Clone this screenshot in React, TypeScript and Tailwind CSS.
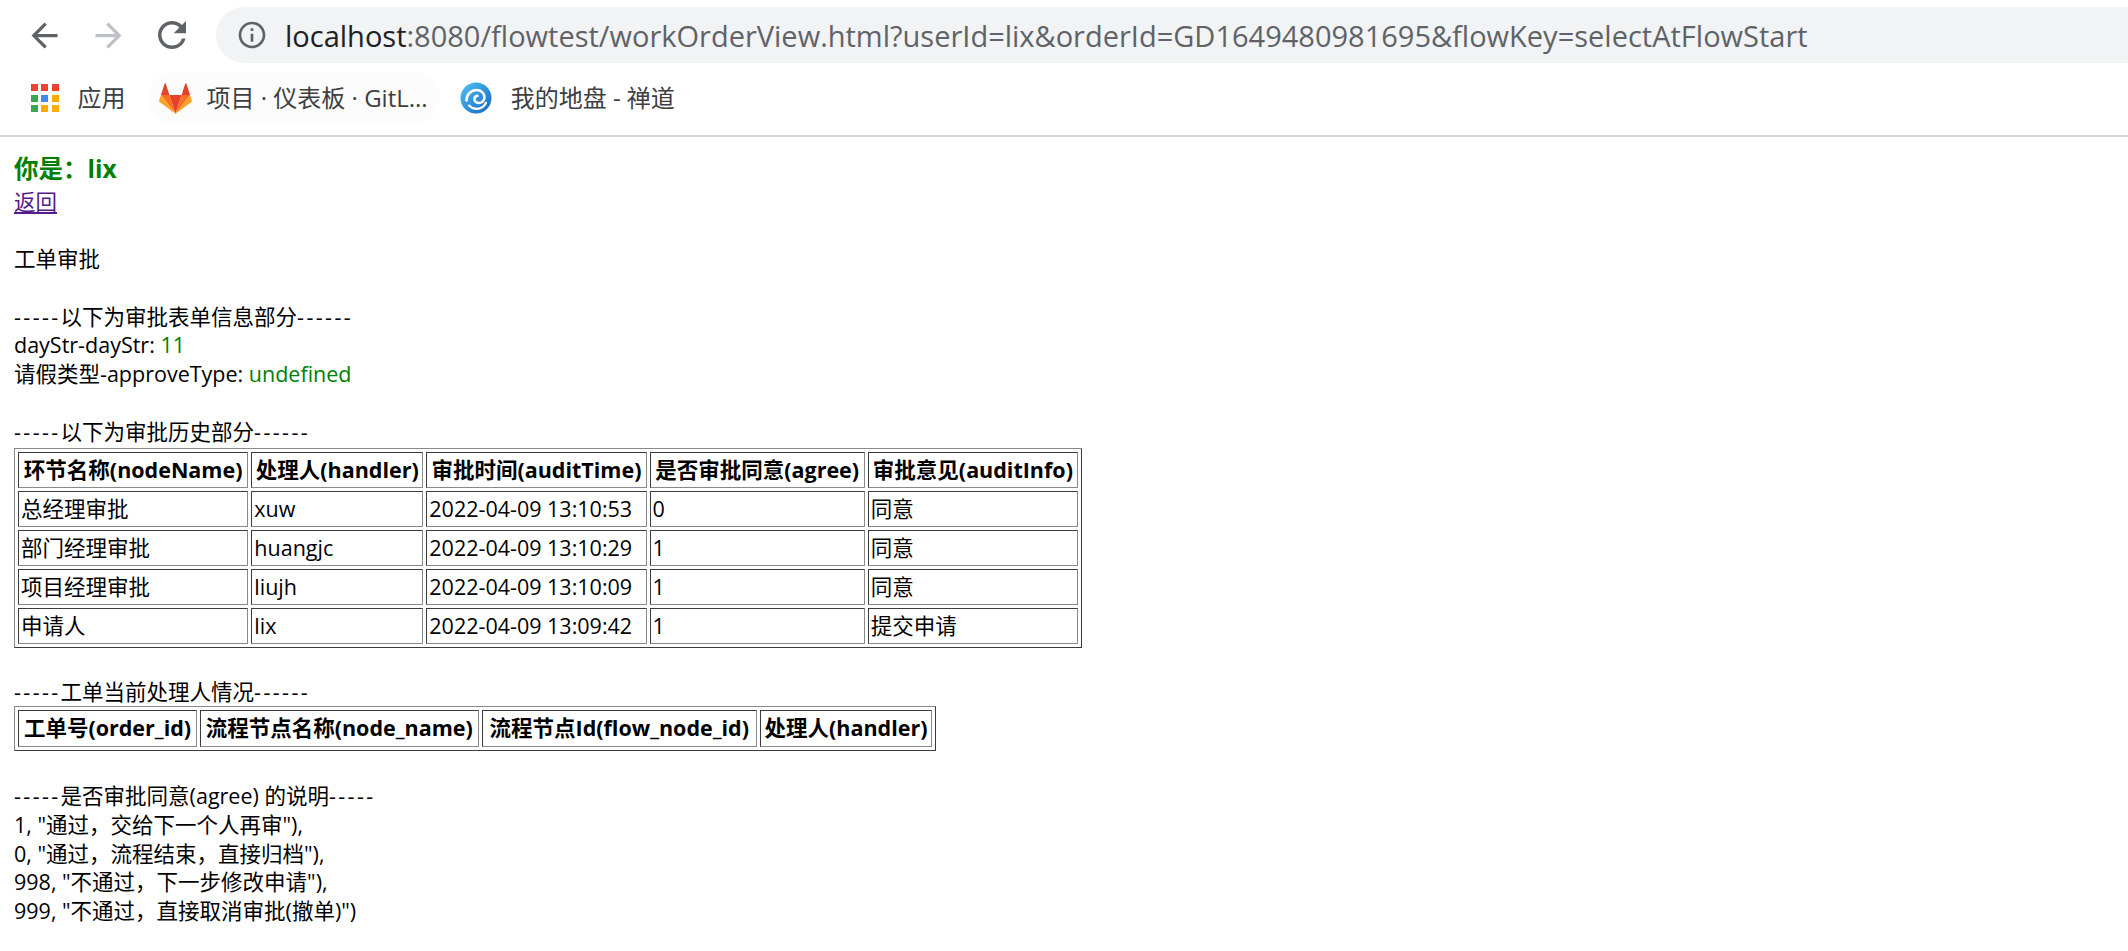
import React from "react";

type HistoryRow = {
  node: string;
  handler: string;
  time: string;
  agree: string;
  info: string;
};

const history: HistoryRow[] = [
  { node: "总经理审批", handler: "xuw", time: "2022-04-09 13:10:53", agree: "0", info: "同意" },
  { node: "部门经理审批", handler: "huangjc", time: "2022-04-09 13:10:29", agree: "1", info: "同意" },
  { node: "项目经理审批", handler: "liujh", time: "2022-04-09 13:10:09", agree: "1", info: "同意" },
  { node: "申请人", handler: "lix", time: "2022-04-09 13:09:42", agree: "1", info: "提交申请" },
];

const agreeNotes = [
  '1, "通过，交给下一个人再审"),',
  '0, "通过，流程结束，直接归档"),',
  '998, "不通过，下一步修改申请"),',
  '999, "不通过，直接取消审批(撤单)")',
];

const cellBorder =
  "border border-solid border-t-[#3c3c3c] border-l-[#3c3c3c] border-r-[#8a8a8a] border-b-[#8a8a8a]";
const tableBorder =
  "border border-solid border-t-[#8a8a8a] border-l-[#8a8a8a] border-r-[#3c3c3c] border-b-[#3c3c3c]";

// section titles like "-----xxx------": the dashes are wider in the original font
function Divider({ left, text, right }: { left: number; text: string; right: number }) {
  return (
    <div>
      <span className="tracking-[2.4px]">{"-".repeat(left)}</span>
      {text}
      <span className="tracking-[2.4px]">{"-".repeat(right)}</span>
    </div>
  );
}

function AppsIcon() {
  const colors = [
    "bg-[#ea4335]", "bg-[#ea4335]", "bg-[#ea4335]",
    "bg-[#34a853]", "bg-[#4285f4]", "bg-[#f9ab00]",
    "bg-[#34a853]", "bg-[#f9ab00]", "bg-[#f9ab00]",
  ];
  return (
    <div className="grid grid-cols-[7px_7px_7px] gap-[3.3px]">
      {colors.map((c, i) => (
        <span key={i} className={`block w-[7px] h-[7px] ${c}`} />
      ))}
    </div>
  );
}

function GitLabIcon() {
  return (
    <svg width="33" height="31" viewBox="0 0 210 194">
      <path d="M105.06 193.66L143.7 74.73H66.42z" fill="#e24329" />
      <path d="M105.06 193.65L66.42 74.73H12.27z" fill="#fc6d26" />
      <path d="M12.27 74.73L.53 110.87c-1.07 3.3.1 6.91 2.9 8.95l101.63 73.84z" fill="#fca326" />
      <path d="M12.27 74.73h54.15L43.2 3.26c-1.2-3.68-6.4-3.68-7.6 0z" fill="#e24329" />
      <path d="M105.06 193.65l38.64-118.92h54.15z" fill="#fc6d26" />
      <path d="M197.85 74.73l11.74 36.14c1.07 3.3-.1 6.91-2.9 8.95l-101.63 73.84z" fill="#fca326" />
      <path d="M197.85 74.73h-54.15l23.27-71.47c1.2-3.68 6.4-3.68 7.6 0z" fill="#e24329" />
    </svg>
  );
}

function ZentaoIcon() {
  return (
    <svg width="32" height="32" viewBox="0 0 32 32">
      <defs>
        <linearGradient id="zt" x1="0" y1="0" x2="1" y2="1">
          <stop offset="0" stopColor="#4fc3f7" />
          <stop offset="1" stopColor="#1565c0" />
        </linearGradient>
      </defs>
      <circle cx="16" cy="16" r="15.5" fill="url(#zt)" />
      <path
        d="M6.5 18.5c0-6 4.5-10.5 10-10.5 4.6 0 8 3.2 8 7.2 0 3.3-2.6 5.8-5.6 5.8-2.6 0-4.5-1.8-4.5-4 0-1.8 1.4-3.2 3.1-3.2"
        stroke="#fff"
        strokeWidth="2.6"
        strokeLinecap="round"
        fill="none"
      />
      <path
        d="M9 23.5c2 2.2 4.6 3.3 7.6 3.3 4.2 0 7.8-2.4 9.4-6"
        stroke="#fff"
        strokeWidth="2.2"
        strokeLinecap="round"
        fill="none"
      />
    </svg>
  );
}

function BrowserChrome() {
  return (
    <div className="font-['Open_Sans','Noto_Sans_CJK_SC',sans-serif]">
      <div className="h-[70px] flex items-center pl-[24.5px]">
        <svg width="39" height="39" viewBox="0 0 24 24" fill="#5f6368">
          <path d="M20 11H7.83l5.59-5.59L12 4l-8 8 8 8 1.41-1.41L7.83 13H20v-2z" />
        </svg>
        <svg width="39" height="39" viewBox="0 0 24 24" fill="#bdc1c6" className="ml-[25px]">
          <path d="M12 4l-1.41 1.41L16.17 11H4v2h12.17l-5.58 5.59L12 20l8-8z" />
        </svg>
        <svg width="42" height="42" viewBox="0 0 24 24" fill="#5f6368" className="ml-[23.5px]">
          <path d="M17.65 6.35A7.958 7.958 0 0 0 12 4c-4.42 0-7.99 3.58-7.99 8s3.57 8 7.99 8c3.73 0 6.84-2.55 7.73-6h-2.08A5.99 5.99 0 0 1 12 18c-3.31 0-6-2.69-6-6s2.69-6 6-6c1.66 0 3.14.69 4.22 1.78L13 11h7V4l-2.35 2.35z" />
        </svg>
        <div className="ml-[23px] flex-1 h-[56px] rounded-l-full bg-[#f1f3f4] flex items-center pl-[20px]">
          <svg width="32" height="32" viewBox="0 0 24 24" fill="#5f6368">
            <path d="M11 7h2v2h-2zm0 4h2v6h-2zm1-9C6.48 2 2 6.48 2 12s4.48 10 10 10 10-4.48 10-10S17.52 2 12 2zm0 18c-4.41 0-8-3.59-8-8s3.59-8 8-8 8 3.59 8 8-3.59 8-8 8z" />
          </svg>
          <span className="ml-[17px] text-[29px] leading-none whitespace-nowrap text-[#5f6368]">
            <span className="text-[#202124]">localhost</span>
            :8080/flowtest/workOrderView.html?userId=lix&amp;orderId=GD1649480981695&amp;flowKey=selectAtFlowStart
          </span>
        </div>
      </div>
      <div className="h-[67px] border-b-2 border-[#d6d6d6] flex items-center pb-[9px] text-[24px] text-[#3c4043] whitespace-nowrap">
        <div className="ml-[31px] flex items-center">
          <AppsIcon />
          <span className="ml-[19px]">应用</span>
        </div>
        <div className="ml-[22px] h-[52px] rounded-full bg-[#fcfcfc] flex items-center pl-[11px] pr-[12px]">
          <GitLabIcon />
          <span className="ml-[15px]">项目 · 仪表板 · GitL...</span>
        </div>
        <div className="ml-[20px] flex items-center">
          <ZentaoIcon />
          <span className="ml-[19px]">我的地盘 - 禅道</span>
        </div>
      </div>
    </div>
  );
}

function HistoryTable() {
  const widths = ["w-[229px]", "w-[171px]", "w-[219px]", "w-[214px]", "w-[209px]"];
  const heads = ["环节名称(nodeName)", "处理人(handler)", "审批时间(auditTime)", "是否审批同意(agree)", "审批意见(auditInfo)"];
  return (
    <table className={`${tableBorder} border-separate border-spacing-[3.5px] table-fixed w-[1068px] mt-[2px] mb-[1px]`}>
      <thead>
        <tr>
          {heads.map((h, i) => (
            <th key={h} className={`${cellBorder} ${widths[i]} px-[2px] py-[2px] leading-[29.5px] font-bold text-center whitespace-nowrap`}>
              {h}
            </th>
          ))}
        </tr>
      </thead>
      <tbody>
        {history.map((r) => (
          <tr key={r.node}>
            {[r.node, r.handler, r.time, r.agree, r.info].map((v, i) => (
              <td key={i} className={`${cellBorder} px-[2px] py-[2px] leading-[30px] text-left whitespace-nowrap`}>
                {v}
              </td>
            ))}
          </tr>
        ))}
      </tbody>
    </table>
  );
}

function CurrentHandlerTable() {
  const heads = [
    { label: "工单号(order_id)", w: "w-[178px]" },
    { label: "流程节点名称(node_name)", w: "w-[277px]" },
    { label: "流程节点Id(flow_node_id)", w: "w-[274px]" },
    { label: "处理人(handler)", w: "w-[171px]" },
  ];
  return (
    <table className={`${tableBorder} border-separate border-spacing-[3.5px] table-fixed w-[922px] mb-[2.5px]`}>
      <thead>
        <tr>
          {heads.map((h) => (
            <th key={h.label} className={`${cellBorder} ${h.w} px-[2px] py-[2px] leading-[30.5px] font-bold text-center whitespace-nowrap`}>
              {h.label}
            </th>
          ))}
        </tr>
      </thead>
      <tbody />
    </table>
  );
}

export default function App() {
  return (
    <div className="w-[2128px] h-[951px] overflow-hidden bg-white text-black">
      <BrowserChrome />
      <main className="p-[14px] text-[21.5px] leading-[28.75px] font-['Open_Sans','Noto_Sans_CJK_SC',sans-serif]">
        <div className="text-[24.5px] leading-[36.5px] font-bold text-[#008000]">你是：lix</div>
        <a href="#" className="underline text-[#551a8b]">返回</a>
        <br />
        <br />
        <div>工单审批</div>
        <br />
        <Divider left={5} text="以下为审批表单信息部分" right={6} />
        <div>
          dayStr-dayStr: <span className="text-[#008000]">11</span>
        </div>
        <div>
          请假类型-approveType: <span className="text-[#008000]">undefined</span>
        </div>
        <br />
        <Divider left={5} text="以下为审批历史部分" right={6} />
        <HistoryTable />
        <br />
        <Divider left={5} text="工单当前处理人情况" right={6} />
        <CurrentHandlerTable />
        <br />
        <Divider left={5} text="是否审批同意(agree) 的说明" right={5} />
        {agreeNotes.map((n) => (
          <div key={n}>{n}</div>
        ))}
      </main>
    </div>
  );
}
